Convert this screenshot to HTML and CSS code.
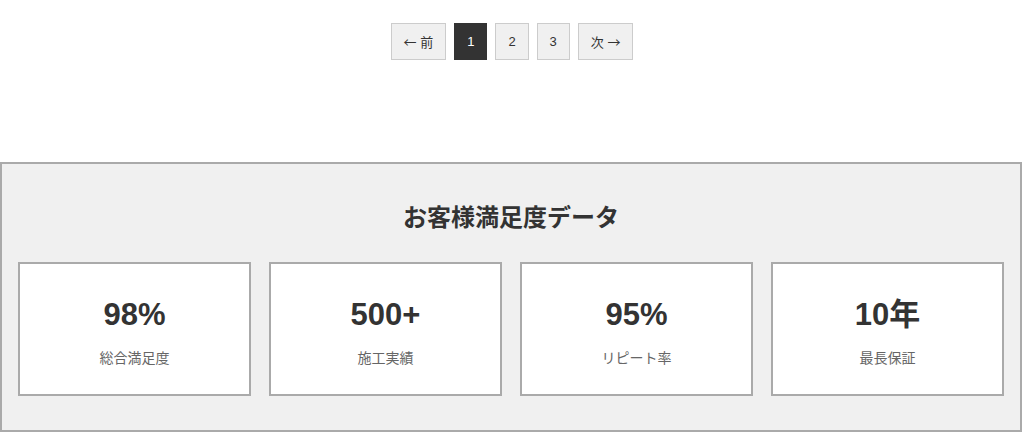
FILE: index.html
```html
<!DOCTYPE html>
<html lang="ja">
<head>
<meta charset="utf-8">
<title>お客様満足度データ</title>
<link rel="stylesheet" href="styles.css">
</head>
<body>
<nav class="pagination">
  <a class="page-btn" href="#"><span class="arrow">←</span> 前</a>
  <a class="page-btn active" href="#">1</a>
  <a class="page-btn" href="#">2</a>
  <a class="page-btn" href="#">3</a>
  <a class="page-btn" href="#">次 <span class="arrow">→</span></a>
</nav>
<section class="stats">
  <h2 class="stats-title">お客様満足度データ</h2>
  <div class="stats-grid">
    <div class="stat-card">
      <div class="stat-value">98%</div>
      <div class="stat-label">総合満足度</div>
    </div>
    <div class="stat-card">
      <div class="stat-value">500+</div>
      <div class="stat-label">施工実績</div>
    </div>
    <div class="stat-card">
      <div class="stat-value">95%</div>
      <div class="stat-label">リピート率</div>
    </div>
    <div class="stat-card">
      <div class="stat-value">10年</div>
      <div class="stat-label">最長保証</div>
    </div>
  </div>
</section>
</body>
</html>
```
FILE: styles.css
```css
* { box-sizing: border-box; }
html, body { margin: 0; padding: 0; background: #fff; }
body {
  font-family: "Liberation Sans", Arial, "Noto Sans CJK JP", sans-serif;
  color: #333;
}
.pagination {
  display: flex;
  justify-content: center;
  gap: 8px;
  padding-top: 23px;
  height: 162px;
}
.page-btn {
  display: block;
  height: 37px;
  line-height: 35px;
  padding: 0 12px;
  border: 1px solid #ccc;
  background: #f0f0f0;
  color: #333;
  font-size: 13px;
  text-decoration: none;
}
.arrow {
  font-family: "Noto Sans CJK JP", sans-serif;
}
.page-btn.active {
  background: #333;
  border-color: #333;
  color: #fff;
}
.stats {
  width: 1022px;
  background: #f0f0f0;
  border: 2px solid #aaa;
  padding: 36px 16px 34px;
}
.stats-title {
  margin: 0 0 26px;
  text-align: center;
  font-size: 24px;
  line-height: 36px;
  font-weight: bold;
  color: #333;
}
.stats-grid {
  display: grid;
  grid-template-columns: repeat(4, 1fr);
  gap: 18px;
}
.stat-card {
  background: #fff;
  border: 2px solid #aaa;
  height: 134px;
  padding: 32px 10px 0;
  text-align: center;
}
.stat-value {
  font-size: 31px;
  line-height: 38px;
  font-weight: bold;
  color: #333;
  margin-bottom: 14px;
}
.stat-label {
  font-size: 14px;
  line-height: 21px;
  color: #666;
}
```
